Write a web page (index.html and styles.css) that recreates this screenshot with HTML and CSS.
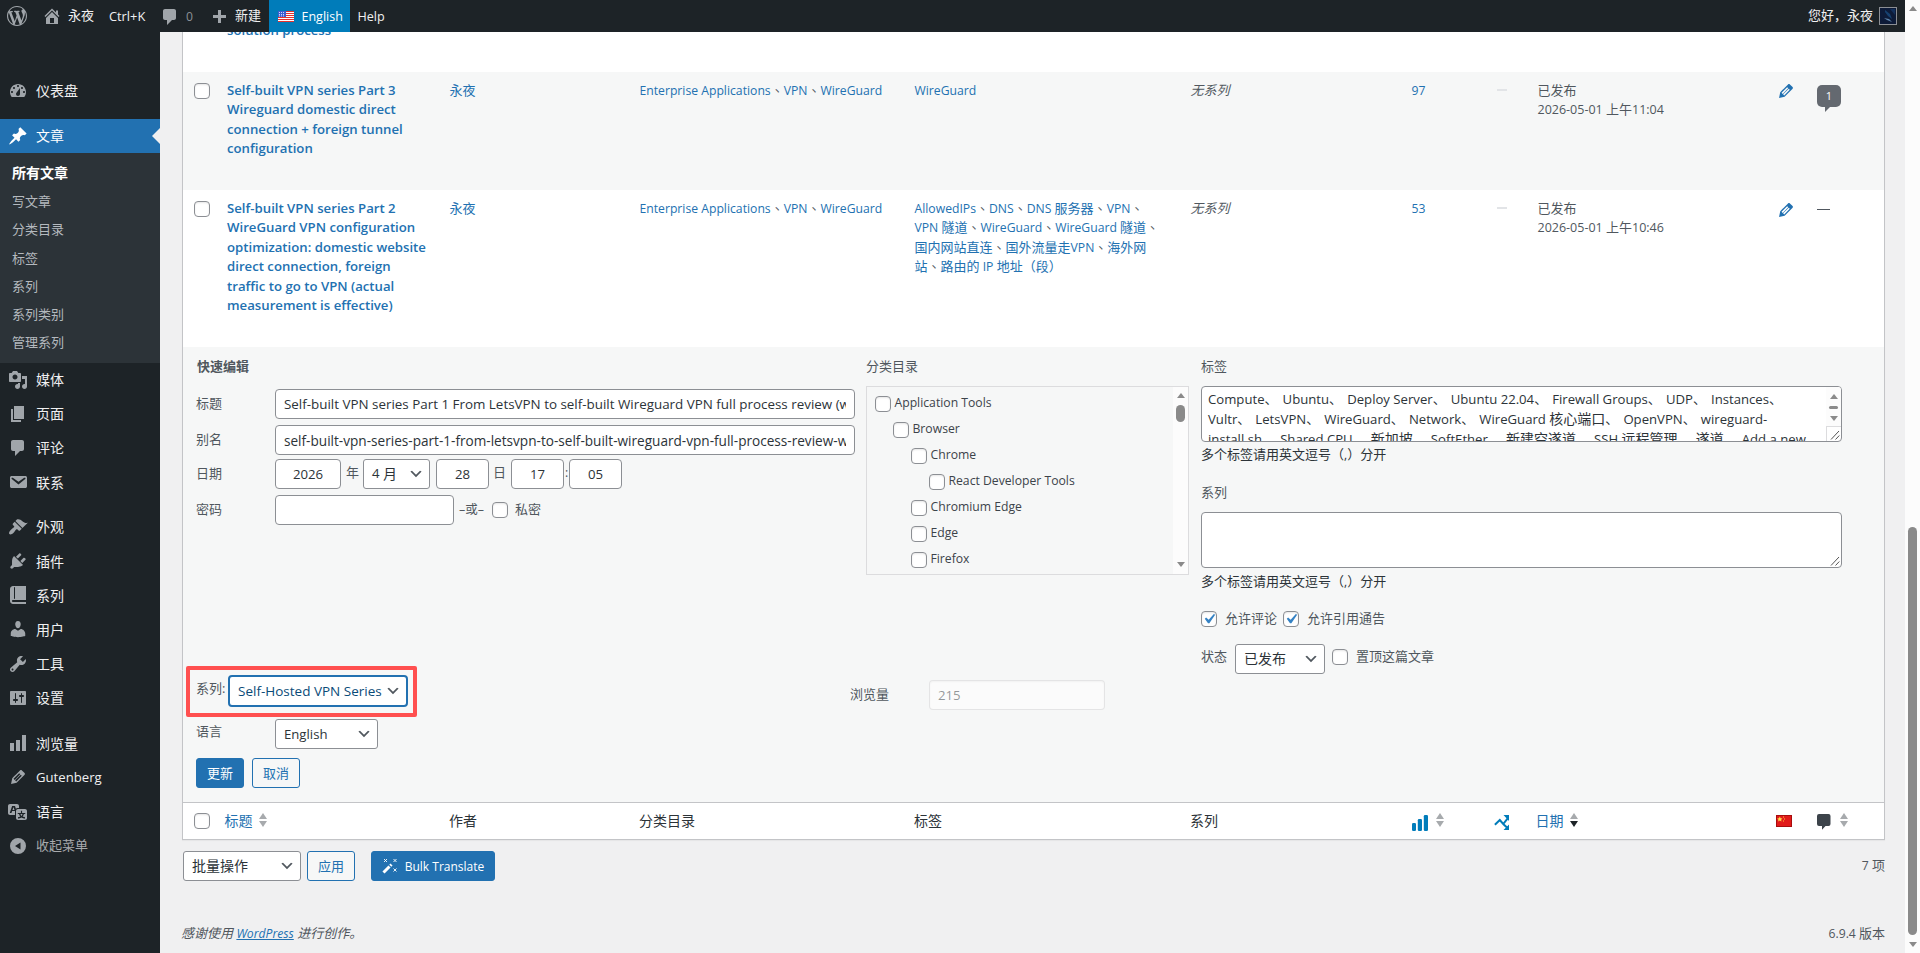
FILE: index.html
```html
<!DOCTYPE html>
<html lang="zh-CN">
<head>
<meta charset="utf-8">
<title>文章 ‹ 永夜 — WordPress</title>
<link rel="stylesheet" href="styles.css">
</head>
<body>
<svg class="sprite" aria-hidden="true">
  <symbol id="wp" viewBox="0 0 20 20"><path d="M20 10c0-5.51-4.49-10-10-10C4.48 0 0 4.49 0 10c0 5.52 4.48 10 10 10 5.51 0 10-4.48 10-10zM7.78 15.37L4.37 6.22c.55-.02 1.17-.08 1.17-.08.5-.06.44-1.13-.06-1.11 0 0-1.45.11-2.37.11-.18 0-.37 0-.58-.01C4.12 2.69 6.87 1.11 10 1.11c2.33 0 4.45.87 6.05 2.34-.68-.11-1.65.39-1.65 1.58 0 .74.45 1.36.9 2.1.35.61.55 1.36.55 2.46 0 1.49-1.4 5-1.4 5l-3.03-8.37c.54-.02.82-.17.82-.17.5-.05.44-1.25-.06-1.22 0 0-1.44.12-2.38.12-.87 0-2.33-.12-2.33-.12-.5-.03-.56 1.2-.06 1.22l.92.08 1.26 3.41zM17.41 10c.24-.64.74-1.87.43-4.25.7 1.29 1.05 2.71 1.05 4.25 0 3.29-1.73 6.24-4.4 7.78.97-2.59 1.94-5.2 2.92-7.78zM6.1 18.09C3.12 16.65 1.11 13.53 1.11 10c0-1.3.23-2.48.72-3.59C3.25 10.3 4.67 14.2 6.1 18.09zm4.03-6.63l2.58 6.98c-.86.29-1.76.45-2.71.45-.79 0-1.57-.11-2.29-.33.81-2.38 1.62-4.74 2.42-7.1z"/></symbol>
  <symbol id="home" viewBox="0 0 20 20"><path d="M16 8.5l1.53 1.53-1.06 1.06L10 4.6l-6.47 6.49-1.06-1.06L10 2.5l4 4v-2h2v4zm-6-2.46l6 5.99V18H4v-5.97zM12 17v-5H8v5h4z"/></symbol>
  <symbol id="pin" viewBox="0 0 20 20"><path d="M10.44 3.02l1.82-1.82 6.36 6.35-1.83 1.82c-1.05-.68-2.48-.57-3.41.36l-.75.75c-.92.93-1.04 2.35-.35 3.41l-1.83 1.82-2.41-2.41-2.8 2.79c-.42.42-3.38 2.71-3.8 2.29s1.86-3.39 2.28-3.81l2.79-2.79L4.1 9.36l1.83-1.82c1.05.69 2.48.57 3.4-.36l.75-.75c.93-.92 1.05-2.35.36-3.41z"/></symbol>
  <symbol id="comments" viewBox="0 0 20 20"><path d="M5 2h9c1.1 0 2 .9 2 2v7c0 1.1-.9 2-2 2h-2l-5 5v-5H5c-1.1 0-2-.9-2-2V4c0-1.1.9-2 2-2z"/></symbol>
  <symbol id="page" viewBox="0 0 20 20"><path d="M6 15V2h10v13H6zm-1 1h8v2H3V5h2v11z"/></symbol>
  <symbol id="users" viewBox="0 0 20 20"><path d="M10 9.25c-2.27 0-2.73-3.44-2.73-3.44C7 4.02 7.82 2 9.97 2c2.16 0 2.98 2.02 2.71 3.81 0 0-.41 3.44-2.68 3.44zm0 2.57L12.72 10c2.39 0 4.52 2.33 4.52 4.53v2.49s-3.65 1.13-7.24 1.13c-3.65 0-7.24-1.13-7.24-1.13v-2.49c0-2.25 1.94-4.48 4.47-4.48z"/></symbol>
  <symbol id="tools" viewBox="0 0 20 20"><path d="M16.68 9.77c-1.34 1.34-3.3 1.67-4.95.99l-5.41 6.52c-.99.99-2.59.99-3.58 0s-.99-2.59 0-3.57l6.52-5.42c-.68-1.65-.35-3.61.99-4.95 1.28-1.28 3.12-1.62 4.72-1.06l-2.89 2.89 2.82 2.82 2.86-2.87c.53 1.58.18 3.39-1.08 4.65zM3.81 16.21c.4.39 1.04.39 1.43 0 .4-.4.4-1.04 0-1.43-.39-.4-1.03-.4-1.43 0-.39.39-.39 1.03 0 1.43z"/></symbol>
  <symbol id="settings" viewBox="0 0 20 20"><path d="M18 16V4c0-.55-.45-1-1-1H3c-.55 0-1 .45-1 1v12c0 .55.45 1 1 1h14c.55 0 1-.45 1-1zM8 11h1c.55 0 1 .45 1 1s-.45 1-1 1H8v1.5c0 .28-.22.5-.5.5s-.5-.22-.5-.5V13H6c-.55 0-1-.45-1-1s.45-1 1-1h1V5.500c0-.28.22-.5.5-.5s.5.22.5.5V11zm5-2h-1c-.55 0-1-.45-1-1s.45-1 1-1h1V5.500c0-.28.22-.5.5-.5s.5.22.5.5V7h1c.55 0 1 .45 1 1s-.45 1-1 1h-1v5.500c0 .28-.22.5-.5.5s-.5-.22-.5-.5V9z"/></symbol>
  <symbol id="dashboard" viewBox="0 0 20 20"><path d="M3.76 16h12.48c1.1-1.37 1.76-3.11 1.76-5 0-4.42-3.58-8-8-8s-8 3.58-8 8c0 1.89.66 3.63 1.76 5zM10 4c.55 0 1 .45 1 1s-.45 1-1 1-1-.45-1-1 .45-1 1-1zM6 6c.55 0 1 .45 1 1s-.45 1-1 1-1-.45-1-1 .45-1 1-1zm8 0c.55 0 1 .45 1 1s-.45 1-1 1-1-.45-1-1 .45-1 1-1zm-5.37 5.55L12 7v6c0 1.1-.9 2-2 2s-2-.9-2-2c0-.57.24-1.08.63-1.45zM4 10c.55 0 1 .45 1 1s-.45 1-1 1-1-.45-1-1 .45-1 1-1zm12 0c.55 0 1 .45 1 1s-.45 1-1 1-1-.45-1-1 .45-1 1-1z"/></symbol>
  <symbol id="media" viewBox="0 0 20 20"><path d="M13 11V4c0-.55-.45-1-1-1h-1.67L9 1H5L3.67 3H2c-.55 0-1 .45-1 1v7c0 .55.45 1 1 1h10c.55 0 1-.45 1-1zM7 4.500c1.38 0 2.500 1.12 2.500 2.500S8.380 9.500 7 9.500 4.500 8.380 4.500 7 5.620 4.500 7 4.500zM14 6h5v10.500c0 1.380-1.120 2.500-2.500 2.500S14 17.880 14 16.500s1.120-2.500 2.500-2.500c.17 0 .34.02.5.05V9h-3V6zm-4 8.050V13h2v3.500c0 1.380-1.120 2.500-2.500 2.500S7 17.880 7 16.500 8.120 14 9.500 14c.17 0 .34.02.5.05z"/></symbol>
  <symbol id="email" viewBox="0 0 20 20"><path d="M3.87 4h13.25C18.37 4 19 4.59 19 5.79v8.42c0 1.19-.63 1.79-1.88 1.79H3.87c-1.25 0-1.88-.6-1.88-1.79V5.79c0-1.2.63-1.79 1.88-1.79zm6.62 8.6l6.74-5.53c.24-.2.43-.66.13-1.07-.29-.41-.82-.42-1.17-.17l-5.7 3.86L4.8 5.83c-.35-.25-.88-.24-1.17.17-.3.41-.11.87.13 1.07z"/></symbol>
  <symbol id="appearance" viewBox="0 0 20 20"><path d="M14.48 11.06L7.41 3.99l1.5-1.5c.5-.56 2.3-.47 3.51.32 1.21.8 1.43 1.28 2.91 2.1 1.18.64 2.45 1.26 4.45.85zm-.71.71L6.7 4.7 4.93 6.47c-.39.39-.39 1.02 0 1.41l1.06 1.06c.39.39.39 1.03 0 1.42-.6.6-1.43 1.11-2.21 1.69-.35.26-.7.53-1.01.84C1.43 14.23.4 16.08 1.4 17.07c.99 1 2.84-.03 4.18-1.36.31-.31.58-.66.85-1.02.57-.78 1.08-1.61 1.69-2.21.39-.39 1.02-.39 1.41 0l1.06 1.06c.39.39 1.02.39 1.41 0z"/></symbol>
  <symbol id="plugins" viewBox="0 0 20 20"><path d="M13.11 4.36L9.87 7.6 8 5.73l3.24-3.24c.35-.34 1.05-.2 1.56.32.52.51.66 1.21.31 1.55zm-8 1.77l.91-1.12 9.01 9.01-1.19.84c-.71.71-2.63 1.16-3.82 1.16H6.14L4.9 17.26c-.59.59-1.54.59-2.12 0-.59-.58-.59-1.53 0-2.12l1.24-1.24v-3.88c0-1.13.4-3.19 1.09-3.89zm7.26 3.97l3.24-3.24c.34-.35 1.04-.21 1.55.31.52.51.66 1.21.31 1.55l-3.24 3.25z"/></symbol>
  <symbol id="book" viewBox="0 0 20 20"><path d="M5 17h13v2H5c-1.66 0-3-1.34-3-3V4c0-1.66 1.34-3 3-3h13v14H5c-.55 0-1 .45-1 1s.45 1 1 1zm2-3.5v-11c0-.28-.22-.5-.5-.5s-.5.22-.5.5v11c0 .28.22.5.5.5s.5-.22.5-.5z"/></symbol>
  <symbol id="chart" viewBox="0 0 20 20"><path d="M18 18V2h-4v16h4zm-6 0V7H8v11h4zm-6 0v-8H2v8h4z"/></symbol>
  <symbol id="edit" viewBox="0 0 20 20"><path d="M13.89 3.39l2.71 2.72c.46.46.42 1.24.03 1.64l-8.01 8.02-5.56 1.16 1.16-5.58s7.6-7.63 7.99-8.03c.39-.39 1.22-.39 1.68.07zm-2.73 2.79l-5.59 5.61 1.11 1.11 5.54-5.65zm-2.97 8.23l5.58-5.6-1.07-1.08-5.59 5.6z"/></symbol>
  <symbol id="translation" viewBox="0 0 20 20"><path d="M11 7H9.49c-.63 0-1.25.3-1.59.7L7 5H4.13l-2.39 7h1.69l.74-2H7v4H2c-1.1 0-2-.9-2-2V5c0-1.1.9-2 2-2h7c1.1 0 2 .9 2 2v2zM6.51 9H4.49l1-2.93zM10 8h7c1.1 0 2 .9 2 2v7c0 1.1-.9 2-2 2h-7c-1.1 0-2-.9-2-2v-7c0-1.1.9-2 2-2zm7.25 5v-1.08h-3.17V9.75h-1.16v2.17H9.75V13h1.28c.11.85.56 1.85 1.28 2.62-.87.36-1.89.62-2.31.62-.01.02.22.97.2 1.46.84 0 2.21-.5 3.28-1.15 1.09.65 2.48 1.15 3.34 1.15-.02-.49.2-1.44.2-1.46-.43 0-1.49-.27-2.38-.63.7-.77 1.14-1.77 1.25-2.61h1.36zm-3.81 1.93c-.5-.46-.85-1.13-1.01-1.93h2.09c-.17.8-.51 1.47-1 1.93l-.04.03s-.03-.02-.04-.03z"/></symbol>
  <symbol id="collapse" viewBox="0 0 20 20"><path fill-rule="evenodd" d="M10 2a8 8 0 1 1 0 16 8 8 0 0 1 0-16zm2.500 4.500l-5.500 3.500 5.500 3.500z"/></symbol>
  <symbol id="plus" viewBox="0 0 20 20"><path d="M17 7v3h-5v5H9v-5H4V7h5V2h3v5h5z"/></symbol>
  <symbol id="chevron" viewBox="0 0 20 20"><path d="M5 6l5 5 5-5 2 1-7 7-7-7 2-1z"/></symbol>
  <symbol id="check" viewBox="0 0 20 20"><path d="M14.830 4.890l1.340.94-5.810 8.380H9.020L5.780 9.670l1.340-1.250 2.570 2.400z"/></symbol>
  <symbol id="bars" viewBox="0 0 16 16"><rect x="0" y="8" width="4" height="8" rx="1.200"/><rect x="5.800" y="4" width="4.200" height="12" rx="1.200"/><rect x="11.800" y="0" width="4.200" height="16" rx="1.200"/></symbol>
  <symbol id="share" viewBox="0 0 16 16"><path d="M.9 9.800L5.800 5l3.400 4L13.500 3.600M9.200 9l4.300 4" fill="none" stroke="#007cba" stroke-width="2"/><path d="M9.500 0H15v6zM15 9.500V15H9.500z" fill="#007cba"/></symbol>
  <symbol id="bubble" viewBox="0 0 14 16"><path d="M2 0h9.500a2 2 0 0 1 2 2v8a2 2 0 0 1-2 2H8.500L5 15.700V12H2a2 2 0 0 1-2-2V2a2 2 0 0 1 2-2z"/></symbol>
  <symbol id="grip" viewBox="0 0 10 10"><path d="M1 9.500L9 1M5.500 9.500L9.300 5.500" fill="none" stroke="#555" stroke-width="1"/></symbol>
</svg>

<div class="window">
  <div class="app">
    <header class="adminbar">
      <span class="ab ab-logo"><svg class="ic"><use href="#wp"/></svg></span>
      <span class="ab ab-home"><svg class="ic"><use href="#home"/></svg>永夜</span>
      <span class="ab ab-key en">Ctrl+K</span>
      <span class="ab ab-com"><svg class="ic"><use href="#comments"/></svg><i class="en">0</i></span>
      <span class="ab ab-new"><svg class="ic"><use href="#plus"/></svg>新建</span>
      <span class="ab ab-lang en">
        <svg class="flag" viewBox="0 0 16 11"><path fill="#fff" d="M0 0h16v11H0z"/><path stroke="#e5322d" stroke-width="1" d="M0 .5h16M0 2.500h16M0 4.500h16M0 6.500h16M0 8.500h16M0 10.500h16"/><path fill="#3d5fd0" d="M0 0h8v6H0z"/><path stroke="#cdd8ff" stroke-dasharray="1 1" d="M1 1.500h6M1 3.500h6M1 5h6"/></svg>English</span>
      <span class="ab ab-help en">Help</span>
      <span class="ab ab-user">您好，永夜
        <svg class="avatar" viewBox="0 0 18 18"><path fill="#8c8f94" d="M0 0h18v18H0z"/><path fill="#0d1b38" d="M1 1h16v16H1z"/><path fill="#16416f" d="M6 3l5 4 2 5-4-3-3-4z"/><path fill="#5d83a8" d="M5 11l5 1 3 3-5-2z"/><path fill="#12305c" d="M11 2h5v6z"/></svg></span>
    </header>

    <div class="body">
      <nav class="menu">
        <a class="item first"><svg class="ic"><use href="#dashboard"/></svg>仪表盘</a>
        <a class="item current"><svg class="ic"><use href="#pin"/></svg>文章</a>
        <div class="submenu">
          <a class="on">所有文章</a><a>写文章</a><a>分类目录</a><a>标签</a><a>系列</a><a>系列类别</a><a>管理系列</a>
        </div>
        <a class="item"><svg class="ic"><use href="#media"/></svg>媒体</a>
        <a class="item"><svg class="ic"><use href="#page"/></svg>页面</a>
        <a class="item"><svg class="ic"><use href="#comments"/></svg>评论</a>
        <a class="item"><svg class="ic"><use href="#email"/></svg>联系</a>
        <a class="item gap"><svg class="ic"><use href="#appearance"/></svg>外观</a>
        <a class="item"><svg class="ic"><use href="#plugins"/></svg>插件</a>
        <a class="item"><svg class="ic"><use href="#book"/></svg>系列</a>
        <a class="item"><svg class="ic"><use href="#users"/></svg>用户</a>
        <a class="item"><svg class="ic"><use href="#tools"/></svg>工具</a>
        <a class="item"><svg class="ic"><use href="#settings"/></svg>设置</a>
        <a class="item gap last"><svg class="ic"><use href="#chart"/></svg>浏览量</a>
        <a class="item"><svg class="ic"><use href="#edit"/></svg><span class="en14 gut">Gutenberg</span></a>
        <a class="item"><svg class="ic"><use href="#translation"/></svg>语言</a>
        <a class="item fold"><svg class="ic"><use href="#collapse"/></svg>收起菜单</a>
      </nav>

      <main class="content">
        <section class="table">
          <div class="row clipped"><div></div><div class="title">solution process</div></div>

          <div class="row alt r3">
            <div><i class="cb"></i></div>
            <div class="title">Self-built VPN series Part 3<br>Wireguard domestic direct<br>connection + foreign tunnel<br>configuration</div>
            <div><a>永夜</a></div>
            <div><a class="en">Enterprise Applications</a><s>、</s><a class="en">VPN</a><s>、</s><a class="en">WireGuard</a></div>
            <div><a class="en">WireGuard</a></div>
            <div><em>无系列</em></div>
            <div><a class="en">97</a></div>
            <div><b class="dash"></b></div>
            <div>已发布<br><span class="en stamp">2026-05-01 </span>上午<span class="en stamp">11:04</span></div>
            <div><svg class="pencil"><use href="#edit"/></svg></div>
            <div><span class="count en">1</span></div>
          </div>

          <div class="row r2">
            <div><i class="cb"></i></div>
            <div class="title">Self-built VPN series Part 2<br>WireGuard VPN configuration<br>optimization: domestic website<br>direct connection, foreign<br>traffic to go to VPN (actual<br>measurement is effective)</div>
            <div><a>永夜</a></div>
            <div><a class="en">Enterprise Applications</a><s>、</s><a class="en">VPN</a><s>、</s><a class="en">WireGuard</a></div>
            <div><a class="en">AllowedIPs</a><s>、</s><a class="en">DNS</a><s>、</s><a><span class="en">DNS </span>服务器</a><s>、</s><a class="en">VPN</a><s>、</s><br><a><span class="en">VPN </span>隧道</a><s>、</s><a class="en">WireGuard</a><s>、</s><a><span class="en">WireGuard </span>隧道</a><s>、</s><br><a>国内网站直连</a><s>、</s><a>国外流量走<span class="en">VPN</span></a><s>、</s><a>海外网<br>站</a><s>、</s><a>路由的<span class="en"> IP </span>地址（段）</a></div>
            <div><em>无系列</em></div>
            <div><a class="en">53</a></div>
            <div><b class="dash"></b></div>
            <div>已发布<br><span class="en stamp">2026-05-01 </span>上午<span class="en stamp">10:46</span></div>
            <div><svg class="pencil"><use href="#edit"/></svg></div>
            <div><b class="none"></b></div>
          </div>

          <form class="quick">
            <div class="cols">
              <div class="left">
                <h4>快速编辑</h4>
                <label class="field"><span>标题</span><input class="wide" value="Self-built VPN series Part 1 From LetsVPN to self-built Wireguard VPN full process review (with complete notes)"></label>
                <label class="field"><span>别名</span><input class="wide slug" value="self-built-vpn-series-part-1-from-letsvpn-to-self-built-wireguard-vpn-full-process-review-with-notes"></label>
                <div class="field date"><span>日期</span><input class="yy" value="2026"><u class="nian">年</u><div class="select month"><span class="en14">4 </span>月<svg><use href="#chevron"/></svg></div><input class="dd" value="28"><u class="ri">日</u><input class="dd" value="17"><u class="colon en">:</u><input class="dd" value="05"></div>
                <div class="field pass"><span>密码</span><input class="pw" value=""><u class="or">–或–</u><i class="cb"></i><u>私密</u></div>
              </div>
              <div class="mid">
                <h5>分类目录</h5>
                <div class="cats">
                  <ul class="en">
                    <li><i class="cb"></i>Application Tools</li>
                    <li class="d1"><i class="cb"></i>Browser</li>
                    <li class="d2"><i class="cb"></i>Chrome</li>
                    <li class="d3"><i class="cb"></i>React Developer Tools</li>
                    <li class="d2"><i class="cb"></i>Chromium Edge</li>
                    <li class="d2"><i class="cb"></i>Edge</li>
                    <li class="d2"><i class="cb"></i>Firefox</li>
                  </ul>
                  <div class="vbar"><b class="au"></b><b class="thumb"></b><b class="ad"></b></div>
                </div>
              </div>
              <div class="right">
                <h5>标签</h5>
                <div class="area tags">
                  <p><span class="en14">Compute<q></q>Ubuntu<q></q>Deploy Server<q></q>Ubuntu 22.04<q></q>Firewall Groups<q></q>UDP<q></q>Instances<q></q></span><br><span class="en14">Vultr<q></q>LetsVPN<q></q>WireGuard<q></q>Network<q></q>WireGuard </span>核心端口<span class="en14"><q></q>OpenVPN<q></q>wireguard-</span><br><span class="en14">install.sh<q></q>Shared CPU<q></q></span>新加坡<span class="en14"><q></q>SoftEther<q></q></span>新建空遂道<span class="en14"><q></q>SSH </span>远程管理<span class="en14"><q></q></span>遂道<span class="en14"><q></q>Add a new</span></p>
                  <div class="side"><div class="vbar"><b class="au"></b><b class="thumb"></b><b class="ad"></b></div><div class="corner"><svg class="grip"><use href="#grip"/></svg></div></div>
                </div>
                <div class="note">多个标签请用英文逗号（<span class="en">,</span>）分开</div>
                <h5 class="second">系列</h5>
                <div class="area empty"><svg class="grip"><use href="#grip"/></svg></div>
                <div class="note">多个标签请用英文逗号（<span class="en">,</span>）分开</div>
                <div class="checks"><i class="cb"><svg><use href="#check"/></svg></i><span>允许评论</span><i class="cb"><svg><use href="#check"/></svg></i><span>允许引用通告</span></div>
                <div class="status"><span>状态</span><div class="select state">已发布<svg><use href="#chevron"/></svg></div><i class="cb"></i><span class="sticky">置顶这篇文章</span></div>
              </div>
            </div>
            <div class="series">
              <div class="mark"></div>
              <span class="lab">系列:</span><div class="select focus"><span class="en14">Self-Hosted VPN Series</span><svg><use href="#chevron"/></svg></div>
              <span class="vlab">浏览量</span><input class="views" value="215" disabled>
            </div>
            <div class="field lang"><span>语言</span><div class="select language"><span class="en14">English</span><svg><use href="#chevron"/></svg></div></div>
            <div class="actions"><button type="button" class="btn primary">更新</button><button type="button" class="btn">取消</button></div>
          </form>

          <div class="row foot">
            <div><i class="cb"></i></div>
            <div class="t0"><a>标题</a><i class="sort"></i></div>
            <div>作者</div>
            <div>分类目录</div>
            <div>标签</div>
            <div>系列</div>
            <div class="t1"><svg class="bars"><use href="#bars"/></svg><i class="sort"></i></div>
            <div class="t2"><svg class="share"><use href="#share"/></svg></div>
            <div class="t3"><a>日期</a><i class="sort desc"></i></div>
            <div class="t4"><svg class="flag" viewBox="0 0 16 12"><path fill="#a80d0d" d="M0 0h16v12H0z"/><path fill="#e11a1a" d="M1 1h14v10H1z"/><path fill="#ffe04a" d="M3.800 1.500l.8 1.700 1.900.2-1.400 1.300.4 1.900-1.700-1-1.700 1 .4-1.900L1.100 3.400 3 3.200z"/><path fill="#ffc83a" d="M7 1.500h1v1H7zM8 3.500h1v1H8zM7 5.500h1v1H7z"/></svg></div>
            <div class="t5"><svg class="bub"><use href="#bubble"/></svg><i class="sort"></i></div>
          </div>
        </section>

        <div class="tablenav">
          <div class="select bulk">批量操作<svg><use href="#chevron"/></svg></div>
          <button class="btn apply">应用</button>
          <button class="btn primary translate"><svg class="wand" viewBox="0 0 16 16"><path d="M1.500 14.500l6-6" stroke="#fff" stroke-width="3"/><path d="M8.300 7.700l1.200-1.200" stroke="#fff" stroke-width="3"/><path d="M2 1l3 3M5 1L2 4M11.500 1l3 3M14.500 1l-3 3M11.500 10.500l3 3M14.500 10.500l-3 3" stroke="#fff" stroke-width=".9"/></svg>Bulk Translate</button>
          <span class="total"><span class="en">7 </span>项</span>
        </div>
        <footer class="footer"><em>感谢使用 <a class="en">WordPress</a> 进行创作。</em><span><span class="en">6.9.4 </span>版本</span></footer>
      </main>
    </div>
  </div>
  <div class="vbar page"><b class="au"></b><b class="thumb"></b><b class="ad"></b></div>
</div>
</body>
</html>
```

FILE: styles.css
```css
* { box-sizing: border-box; }
body {
  margin: 0;
  height: 953px;
  overflow: hidden;
  background: #f0f0f1;
  color: #50575e;
  font: 13px/19.5px "Open Sans", "Noto Sans CJK SC", sans-serif;
}
.sprite { display: none; }
svg { display: block; flex: none; fill: currentColor; }
a { color: #2271b1; }
u, s { text-decoration: none; }
s { font-family: "Noto Sans CJK TC", sans-serif; -webkit-locale: "zh-TW"; line-height: 0; }
.en { font-size: 12.2px; }
.en14 { font-size: 13.15px; }
.ic { width: 20px; height: 20px; }

.window { display: flex; height: 953px; }
.app { width: 1905px; height: 953px; display: flex; flex-direction: column; }

/* admin bar */
.adminbar { height: 32px; flex: none; display: flex; background: #1d2327; color: #f0f0f1; }
.ab { display: flex; align-items: center; white-space: nowrap; }
.ab .ic { color: #a0a5aa; }
.ab-logo { width: 42px; padding-left: 7px; }
.ab-home { width: 67px; gap: 6px; }
.ab-key { width: 51px; padding-top: 1px; font-size: 12.800px; }
.ab-com { width: 49px; gap: 6px; color: #8c9196; }
.ab-com .ic { margin-top: 2px; }
.ab-com i { font-style: normal; padding-top: 1px; }
.ab-new { width: 60px; gap: 6px; }
.ab-new .ic { margin-top: 3px; }
.ab-lang { width: 81px; gap: 7.500px; padding: 1px 0 0 9px; background: #007cba; color: #fff; font-size: 12.500px; }
.flag { width: 16px; height: 11px; }
.ab-help { padding: 1px 0 0 7.500px; font-size: 12.600px; }
.ab-user { margin-left: auto; margin-right: 8px; gap: 6px; }
.avatar { width: 18px; height: 18px; }

.body { display: flex; flex: 1; min-height: 0; }

/* side menu */
.menu { width: 160px; flex: none; background: #1d2327; display: flex; flex-direction: column; padding-top: 42px; }
.item { height: 34.100px; flex: none; display: flex; align-items: center; gap: 8px; padding-left: 8px; color: #f0f0f1; font-size: 14px; }
.item .ic { color: #a0a5aa; }
.item.gap { margin-top: 10.800px; }
.item.last { margin-top: 11.500px; }
.item.first { margin-bottom: 10.900px; }
.item.current { height: 34px; background: #2271b1; color: #fff; position: relative; }
.item.current .ic { color: #fff; }
.item.current::after { content: ""; position: absolute; right: 0; top: 9px; border: 8px solid transparent; border-left: 0; border-right-color: #f0f0f1; }
.item.fold { color: #a7aaad; font-size: 13px; }
.gut { padding-top: 1px; }
.submenu { height: 210px; flex: none; padding: 6px 0 0 12px; background: #2c3338; display: flex; flex-direction: column; }
.submenu a { height: 28.250px; line-height: 28px; color: #b4b9be; }
.submenu .on { color: #fff; font-size: 14px; font-weight: 700; }

.content { width: 1745px; padding: 0 20px 0 22px; }

/* posts table */
.table { border: 1px solid #c3c4c7; border-top: 0; background: #fff; box-shadow: 0 1px 1px rgba(0,0,0,.04); }
.row { display: grid; grid-template-columns: 34px 223px 190px 275px 276px 221px 85px 41px 241px 38px 77px; padding-top: 8.500px; white-space: nowrap; }
.row > div { padding-left: 9.500px; line-height: 19.500px; }
.row .title { color: #2271b1; padding-left: 10px; font-size: 13.200px; font-weight: 600; }
.clipped { height: 40px; overflow: hidden; }
.clipped .title { margin-top: -20px; height: 20px; }
.alt { background: #f6f7f7; }
.r3 { height: 118px; }
.r2 { height: 157px; }
.row em { font-style: italic; }
.stamp { font-size: 12.500px; }
.cb { display: block; flex: none; width: 16px; height: 16px; border: 1px solid #8c8f94; border-radius: 4px; background: #fff; box-shadow: inset 0 1px 2px rgba(0,0,0,.1); color: #3582c4; }
.row .cb { margin: 2.500px 0 0 1.500px; }
.cb svg { width: 20px; height: 20px; margin: -3px 0 0 -3px; }
.dash { display: block; width: 10px; height: 2px; margin: 8.500px 0 0 .5px; background: #e2e4e7; }
.none { display: block; width: 13px; height: 1px; margin: 10.500px 0 0 .5px; background: #50575e; }
.pencil { width: 20px; height: 20px; margin: .5px 0 0 -2.500px; color: #2271b1; }
.r2 .pencil { margin-top: 1.500px; }
.count { display: flex; justify-content: center; align-items: center; width: 24px; height: 22px; margin: 4.500px 0 0 .5px; border-radius: 5px; background: #646970; color: #fff; font-size: 11px; position: relative; }
.count::after { content: ""; position: absolute; left: 8px; top: 22px; border-top: 5px solid #646970; border-right: 5px solid transparent; }

.select { display: flex; align-items: center; justify-content: space-between; height: 30px; padding: 0 5px 0 8px; border: 1px solid #8c8f94; border-radius: 3px; background: #fff; color: #2c3338; font-size: 14px; white-space: nowrap; }
.select svg { width: 16px; height: 16px; color: #50575e; margin-left: auto; }
input { height: 30px; margin: 0; padding: 0 8px; border: 1px solid #8c8f94; border-radius: 4px; background: #fff; color: #2c3338; font: 13.200px "Open Sans", sans-serif; outline: 0; }

/* quick edit */
.quick { height: 455px; padding: 0 0 0 14px; background: #f6f7f7; white-space: nowrap; }
.cols { display: grid; grid-template-columns: 669px 335px 641px; height: 319px; padding-top: 10px; }
h4, h5 { margin: 0; height: 20px; line-height: 20px; font-size: 13px; font-weight: 400; }
h4 { margin: -1px 0 13px; font-weight: 700; }
h5 { margin: -1px 0 10px; }
.field { display: flex; align-items: center; height: 30px; }
.field > span { width: 79px; margin-left: -1px; }
.left .field { margin-bottom: 6px; }
.left .field:nth-child(3) { margin-bottom: 4px; }
.wide { width: 580px; font-size: 13.400px; }
.slug { font-size: 13.600px; }
.yy { width: 66px; text-align: center; }
.dd { width: 53px; text-align: center; }
.nian { width: 22px; padding: 0 0 3px 5px; }
.ri { width: 22px; padding: 0 0 3px 4px; }
.colon { width: 5px; padding: 0 0 3px 1px; }
.month { width: 67px; margin-right: 6px; white-space: pre; }
.pw { width: 179px; }
.or { width: 38px; padding-left: 5px; font-size: 12.500px; }
.pass .cb { margin-right: 7px; }

.cats { width: 323px; height: 189px; border: 1px solid #dcdcde; display: flex; justify-content: space-between; overflow: hidden; }
.cats ul { margin: 0; padding: 9px 0 0 8px; list-style: none; color: #3c434a; }
.cats li { display: flex; height: 26px; gap: 3.500px; line-height: 13px; }
.d1 { padding-left: 18px; }
.d2 { padding-left: 36px; }
.d3 { padding-left: 54px; }

.vbar { width: 15px; display: flex; flex-direction: column; align-items: center; background: #fcfcfc; }
.vbar b { display: block; flex: none; }
.au { border: 4.500px solid transparent; border-top: 0; border-bottom: 5px solid #8a8a8a; }
.ad { border: 4.500px solid transparent; border-bottom: 0; border-top: 5px solid #8a8a8a; }
.thumb { width: 9px; border-radius: 5px; background: #8a8a8a; }
.cats .au { margin-top: 6px; }
.cats .thumb { height: 17px; margin-top: 7px; }
.cats .ad { margin: auto 0 7px; }

.area { height: 56px; border: 1px solid #8c8f94; border-radius: 4px; background: #fff; display: flex; overflow: hidden; color: #2c3338; }
.area p { margin: 2px 0 0; padding-left: 6px; width: 624px; font-size: 14px; line-height: 20px; }
.area q { quotes: none; display: inline-block; width: 18.100px; }
.area q::after { content: "、"; }
.area q::before { content: ""; }
.side { width: 15px; display: flex; flex-direction: column; }
.side .vbar { height: 39px; }
.side .au { margin-top: 7px; }
.side .thumb { height: 3px; margin: 7px 0; }
.corner { height: 15px; border: 1px solid #dcdcde; border-width: 1px 0 0 1px; display: flex; }
.grip { width: 10px; height: 10px; margin: auto 1px 1px auto; }
.note { height: 20px; margin-top: 2px; line-height: 20px; color: #2c3338; }
.second { margin-top: 18px; }
.empty + .note { margin-top: 3px; }
.checks { display: flex; align-items: center; height: 16px; margin-top: 20px; }
.checks span { width: 58px; margin-left: 8px; }
.status { display: flex; height: 30px; margin-top: 17px; }
.status > span { width: 34px; line-height: 25px; }
.state { width: 90px; margin-right: 7px; }
.status .cb { margin-top: 5px; }
.status .sticky { width: auto; margin-left: 8px; }

.series { position: relative; display: flex; height: 51px; }
.mark { position: absolute; left: -11px; top: 0; width: 231px; height: 51px; border: 4px solid #ff5050; border-radius: 2px; }
.lab { width: 32px; margin-left: -1px; padding-top: 13px; }
.focus { width: 180px; height: 32px; margin-top: 9px; border: 2px solid #2271b1; border-radius: 4px; color: #0a4b78; }
.focus .en14 { font-size: 13.500px; padding-top: 1px; }
.vlab { width: 79px; margin-left: 442px; padding-top: 19px; }
.views { width: 176px; margin-top: 14px; border-color: rgba(220,220,222,.75); background: rgba(255,255,255,.5); color: rgba(44,51,56,.5); box-shadow: inset 0 1px 2px rgba(0,0,0,.04); }
.lang { height: 30px; margin-top: 2px; }
.lang > span { padding-bottom: 4px; }
.language { width: 103px; }
.language span { padding-top: 1px; }
.actions { display: flex; gap: 8px; margin: 9px 0 0 -1px; }
.btn { height: 30px; width: 48px; padding: 0 0 2px; border: 1px solid #2271b1; border-radius: 3px; background: #f6f7f7; color: #2271b1; font: 13px "Open Sans", "Noto Sans CJK SC", sans-serif; }
.btn.primary { background: #2271b1; color: #fff; }

/* column footer */
.foot { height: 37px; border-top: 1px solid #c3c4c7; padding-top: 0; color: #2c3338; font-size: 14px; }
.foot > div { display: flex; align-items: center; padding-left: 9px; }
.foot > div:first-child { padding-left: 9.500px; }
.foot .cb { margin-top: 0; }
.sort { display: flex; flex-direction: column; gap: 2px; width: 8px; height: 15px; margin-top: -1px; }
.sort::before, .sort::after { content: ""; border: 4px solid transparent; }
.sort::before { border-top: 0; border-bottom: 6.500px solid #a7aaad; }
.sort::after { border-bottom: 0; border-top: 6.500px solid #a7aaad; }
.sort.desc::after { border-top-color: #1d2327; }
.foot .t0 { padding-left: 7.500px; gap: 6px; }
.foot .t1 { padding-left: 10px; gap: 8px; }
.foot .t2 { padding-left: 7px; }
.foot .t3 { padding-left: 7.500px; gap: 6px; }
.foot .t4 { padding-left: 7px; }
.foot .t5 { padding-left: 10px; gap: 9px; }
.foot .flag { height: 12px; }
.bars { width: 16px; height: 16px; margin-top: 4px; color: #007cba; }
.share { width: 16px; height: 16px; margin-top: 3px; }
.bub { width: 14px; height: 16px; margin-top: 2px; color: #3c434a; }

.tablenav { display: flex; align-items: center; height: 30px; margin-top: 11px; padding-left: 1px; }
.bulk { width: 118px; margin-right: 6px; }
.apply { margin-right: 16px; }
.btn.translate { width: 124px; display: flex; align-items: center; justify-content: center; gap: 7px; padding: 0; font-size: 12px; }
.wand { width: 16px; height: 16px; }
.total { margin-left: auto; margin-top: -1px; }
.footer { display: flex; justify-content: space-between; margin: 43px 0 0 -1px; }
.footer a { text-decoration: underline; }

.vbar.page { height: 953px; }
.page .au { margin-top: 6px; }
.page .thumb { height: 408px; margin-top: 516px; }
.page .ad { margin-top: 7px; }
```
